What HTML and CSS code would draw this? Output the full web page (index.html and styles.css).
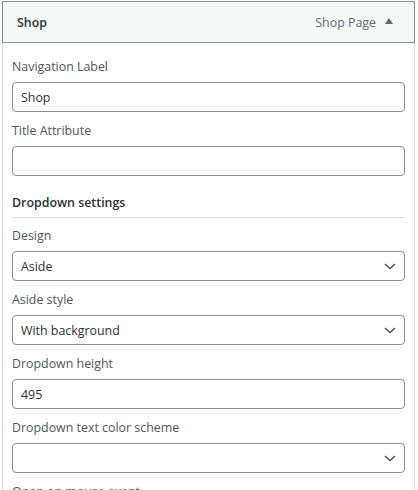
FILE: index.html
```html
<!DOCTYPE html>
<html>
<head>
<meta charset="utf-8">
<link rel="stylesheet" href="styles.css">
</head>
<body>
<div class="item">
  <div class="item-head">
    <span class="item-title">Shop</span>
    <span class="item-controls"><span class="item-type">Shop Page</span><svg class="toggle" viewBox="0 0 8 6" width="8" height="6"><path d="M4 0 L8 6 L0 6 Z" fill="#646970"/></svg></span>
  </div>
  <div class="item-body">
    <div class="field">
      <label class="lbl">Navigation Label</label>
      <div class="input">Shop</div>
    </div>
    <div class="field">
      <label class="lbl">Title Attribute</label>
      <div class="input"></div>
    </div>
    <div class="section-title">Dropdown settings</div>
    <div class="field">
      <label class="lbl">Design</label>
      <div class="input select">Aside<svg class="chev" viewBox="0 0 12 7" width="12" height="7"><path d="M1 1 L6 5.5 L11 1" fill="none" stroke="#50575e" stroke-width="1.6"/></svg></div>
    </div>
    <div class="field">
      <label class="lbl">Aside style</label>
      <div class="input select">With background<svg class="chev" viewBox="0 0 12 7" width="12" height="7"><path d="M1 1 L6 5.5 L11 1" fill="none" stroke="#50575e" stroke-width="1.6"/></svg></div>
    </div>
    <div class="field">
      <label class="lbl">Dropdown height</label>
      <div class="input">495</div>
    </div>
    <div class="field">
      <label class="lbl">Dropdown text color scheme</label>
      <div class="input select"><svg class="chev" viewBox="0 0 12 7" width="12" height="7"><path d="M1 1 L6 5.5 L11 1" fill="none" stroke="#50575e" stroke-width="1.6"/></svg></div>
    </div>
    <div class="field">
      <label class="lbl">Open on mouse event</label>
    </div>
  </div>
</div>
</body>
</html>
```

FILE: styles.css
```css
html, body {
  margin: 0;
  padding: 0;
  background: #fff;
  overflow: hidden;
}
body {
  font-family: "Open Sans", "Noto Sans", sans-serif;
  font-size: 12.4px;
  color: #2c3338;
  height: 490px;
}
.item {
  margin: 1px 3px 0 2px;
}
.item-head {
  height: 40px;
  border: 1px solid #8c8f94;
  background: #f6f7f7;
  display: flex;
  align-items: center;
  justify-content: space-between;
  padding: 0 21px 0 14px;
}
.item-title {
  font-weight: 600;
  color: #2c3338;
  font-size: 12.4px;
}
.item-controls {
  display: flex;
  align-items: center;
  gap: 9px;
}
.item-type {
  color: #646970;
}
.toggle {
  display: block;
  margin-top: -2px;
}
.item-body {
  border-left: 1px solid #dcdcde;
  border-right: 1px solid #dcdcde;
  padding: 15px 9px 0 9px;
  height: 460px;
}
.field {
  margin-bottom: 10px;
}
.lbl {
  display: block;
  line-height: 18px;
  margin-bottom: 6px;
  color: #50575e;
}
.input {
  box-sizing: border-box;
  height: 30px;
  border: 1px solid #8c8f94;
  border-radius: 4px;
  padding: 0 8px;
  display: flex;
  align-items: center;
  color: #2c3338;
  position: relative;
}
.select .chev {
  position: absolute;
  right: 8px;
  top: 11px;
}
.section-title {
  font-weight: 600;
  color: #2c3338;
  line-height: 18px;
  padding-top: 8px;
  padding-bottom: 5px;
  border-bottom: 1px solid #dcdcde;
  margin-bottom: 9px;
}
```
